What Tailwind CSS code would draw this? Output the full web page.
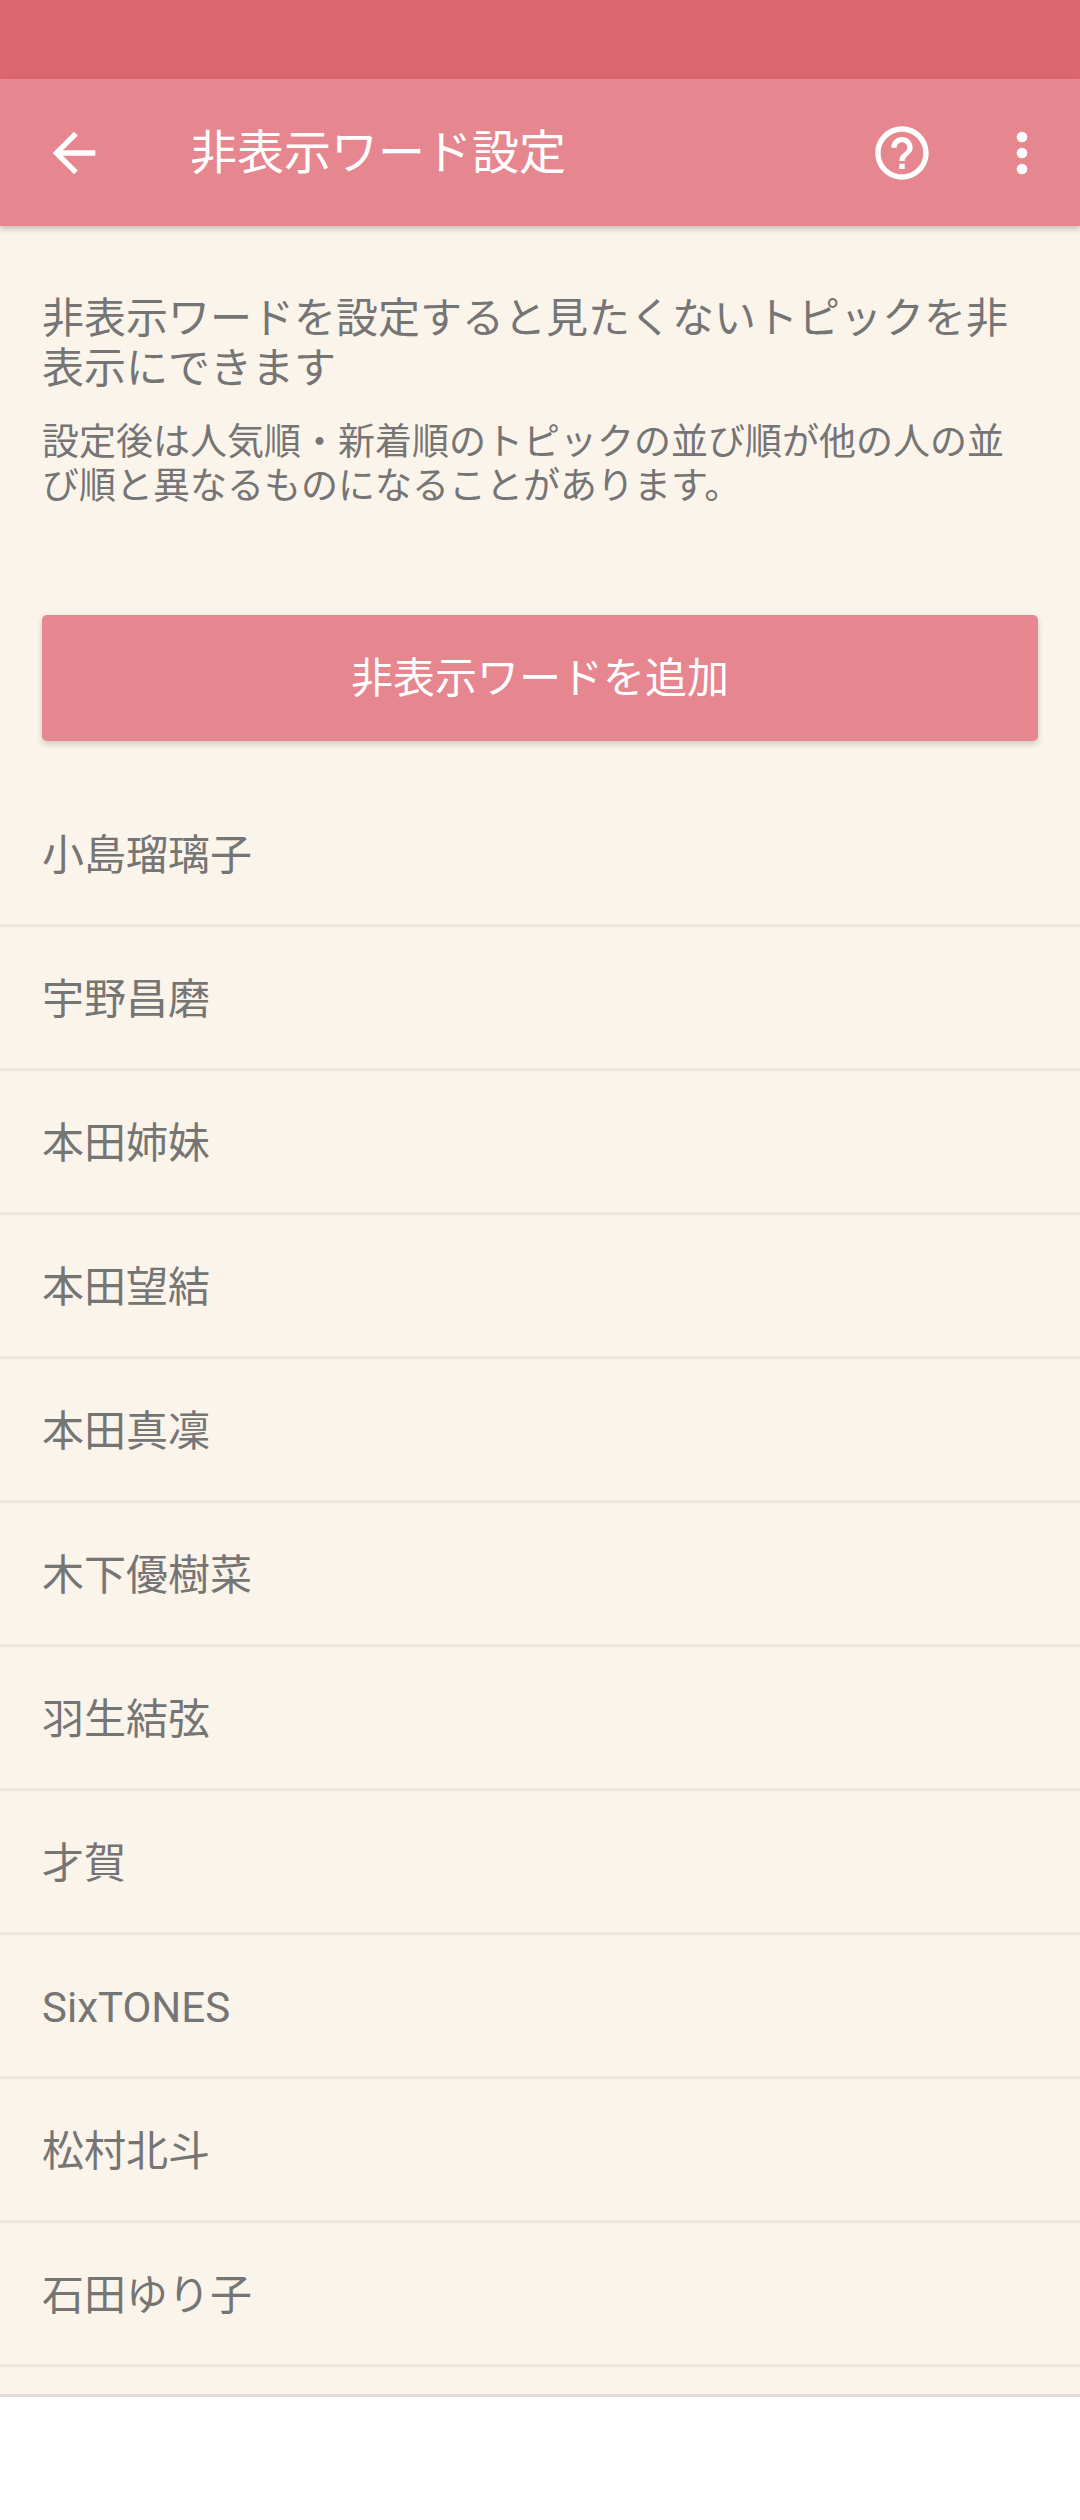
<!DOCTYPE html>
<html lang="ja">
<head>
  <meta charset="UTF-8" />
  <meta name="viewport" content="width=device-width, initial-scale=1.0"/>
  <title>非表示ワード設定</title>
  <script src="https://cdn.jsdelivr.net/npm/@tailwindcss/browser@4"></script>
</head>
<body class="bg-white w-[1080px] h-[2520px] overflow-hidden font-['Roboto','Noto_Sans_CJK_JP',sans-serif]">
  <div class="h-[79px] bg-[#de6670]"></div>

  <header class="relative z-10 h-[147px] bg-[#e6868e] flex items-center pl-[42px] pr-[26px] text-white shadow-[0_3px_6px_rgba(0,0,0,0.22)]">
    <svg class="w-16 h-16" viewBox="0 0 24 24" fill="currentColor"><path d="M20 11H7.83l5.59-5.59L12 4l-8 8 8 8 1.41-1.41L7.83 13H20v-2z"/></svg>
    <h1 class="ml-[84px] text-[47px] leading-none">非表示ワード設定</h1>
    <svg class="w-16 h-16 ml-auto" viewBox="0 0 24 24" fill="currentColor"><path d="M11 18h2v-2h-2v2zm1-16C6.48 2 2 6.48 2 12s4.48 10 10 10 10-4.48 10-10S17.52 2 12 2zm0 18c-4.41 0-8-3.59-8-8s3.59-8 8-8 8 3.59 8 8-3.59 8-8 8zm0-14c-2.21 0-4 1.79-4 4h2c0-1.1.9-2 2-2s2 .9 2 2c0 2-3 1.75-3 5h2c0-2.25 3-2.5 3-5 0-2.21-1.79-4-4-4z"/></svg>
    <svg class="w-16 h-16 ml-[56px]" viewBox="0 0 24 24" fill="currentColor"><circle cx="12" cy="6" r="2"/><circle cx="12" cy="12" r="2"/><circle cx="12" cy="18" r="2"/></svg>
  </header>

  <main class="h-[2171px] bg-[#fbf4ea] border-b-[3px] border-[#dcdcdc] text-[#757575] overflow-hidden">
    <div class="px-[42px] pt-[68px]">
      <p class="text-[42px] leading-[50px]">非表示ワードを設定すると見たくないトピックを非表示にできます</p>
      <p class="mt-[27px] text-[37px] leading-[44px]">設定後は人気順・新着順のトピックの並び順が他の人の並び順と異なるものになることがあります。</p>
    </div>

    <div class="px-[42px] mt-[106px]">
      <button class="w-full h-[126px] rounded-[5px] bg-[#e6868e] text-white text-[42px] shadow-[0_3px_6px_rgba(0,0,0,0.18)]">非表示ワードを追加</button>
    </div>

    <ul class="mt-[42px] text-[42px]">
      <li class="h-[144px] flex items-center pt-[3px] px-[42px] border-b-[3px] border-[#efe7dc]">小島瑠璃子</li>
      <li class="h-[144px] flex items-center pt-[3px] px-[42px] border-b-[3px] border-[#efe7dc]">宇野昌磨</li>
      <li class="h-[144px] flex items-center pt-[3px] px-[42px] border-b-[3px] border-[#efe7dc]">本田姉妹</li>
      <li class="h-[144px] flex items-center pt-[3px] px-[42px] border-b-[3px] border-[#efe7dc]">本田望結</li>
      <li class="h-[144px] flex items-center pt-[3px] px-[42px] border-b-[3px] border-[#efe7dc]">本田真凜</li>
      <li class="h-[144px] flex items-center pt-[3px] px-[42px] border-b-[3px] border-[#efe7dc]">木下優樹菜</li>
      <li class="h-[144px] flex items-center pt-[3px] px-[42px] border-b-[3px] border-[#efe7dc]">羽生結弦</li>
      <li class="h-[144px] flex items-center pt-[3px] px-[42px] border-b-[3px] border-[#efe7dc]">才賀</li>
      <li class="h-[144px] flex items-center pt-[3px] px-[42px] border-b-[3px] border-[#efe7dc]">SixTONES</li>
      <li class="h-[144px] flex items-center pt-[3px] px-[42px] border-b-[3px] border-[#efe7dc]">松村北斗</li>
      <li class="h-[144px] flex items-center pt-[3px] px-[42px] border-b-[3px] border-[#efe7dc]">石田ゆり子</li>
    </ul>
  </main>
</body>
</html>
